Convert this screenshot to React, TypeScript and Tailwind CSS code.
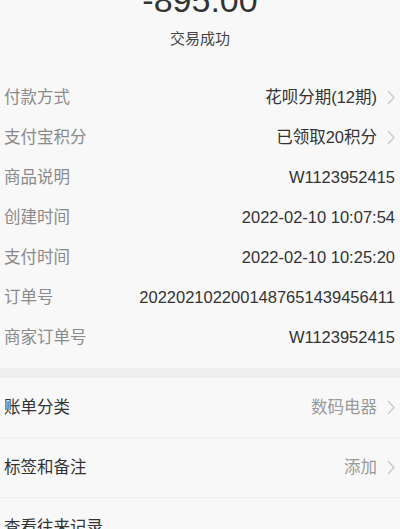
import React from "react"

const font = { fontFamily: '"Liberation Sans", "Noto Sans CJK SC", sans-serif' }

function Chevron() {
  return (
    <svg width="8" height="15" viewBox="0 0 8 15" className="ml-[10px] shrink-0">
      <polyline points="1,1 7,7.5 1,14" fill="none" stroke="#c4c4c4" strokeWidth="1.2" />
    </svg>
  )
}

const details: { label: string; value: string; arrow?: boolean }[] = [
  { label: "付款方式", value: "花呗分期(12期)", arrow: true },
  { label: "支付宝积分", value: "已领取20积分", arrow: true },
  { label: "商品说明", value: "W1123952415" },
  { label: "创建时间", value: "2022-02-10 10:07:54" },
  { label: "支付时间", value: "2022-02-10 10:25:20" },
  { label: "订单号", value: "2022021022001487651439456411" },
  { label: "商家订单号", value: "W1123952415" },
]

const extras: { label: string; value?: string }[] = [
  { label: "账单分类", value: "数码电器" },
  { label: "标签和备注", value: "添加" },
  { label: "查看往来记录" },
]

export default function App() {
  return (
    <div className="w-[400px] h-[529px] overflow-hidden bg-[#f8f8f8]" style={font}>
      <div className="mt-[-17px] text-center text-[34px] leading-[34px] text-[#333]">-895.00</div>
      <div className="mt-[12px] text-center text-[15px] leading-[20px] text-[#444]">交易成功</div>

      <div className="mt-[28px]">
        {details.map((d) => (
          <div key={d.label} className="flex h-[40px] items-center justify-between pl-[4px] pr-[5px] text-[16.5px]">
            <span className="text-[#8a8a8a]">{d.label}</span>
            <span className="flex items-center text-[#333]">
              {d.value}
              {d.arrow && <Chevron />}
            </span>
          </div>
        ))}
      </div>

      <div className="mt-[11px] h-[10px] bg-[#efefef]" />

      <div>
        {extras.map((e) => (
          <div key={e.label} className="flex h-[60px] items-center justify-between border-b border-[#efefef] pl-[4px] pr-[5px] text-[16.5px]">
            <span className="text-[#333]">{e.label}</span>
            {e.value && (
              <span className="flex items-center text-[#999]">
                {e.value}
                <Chevron />
              </span>
            )}
          </div>
        ))}
      </div>
    </div>
  )
}
